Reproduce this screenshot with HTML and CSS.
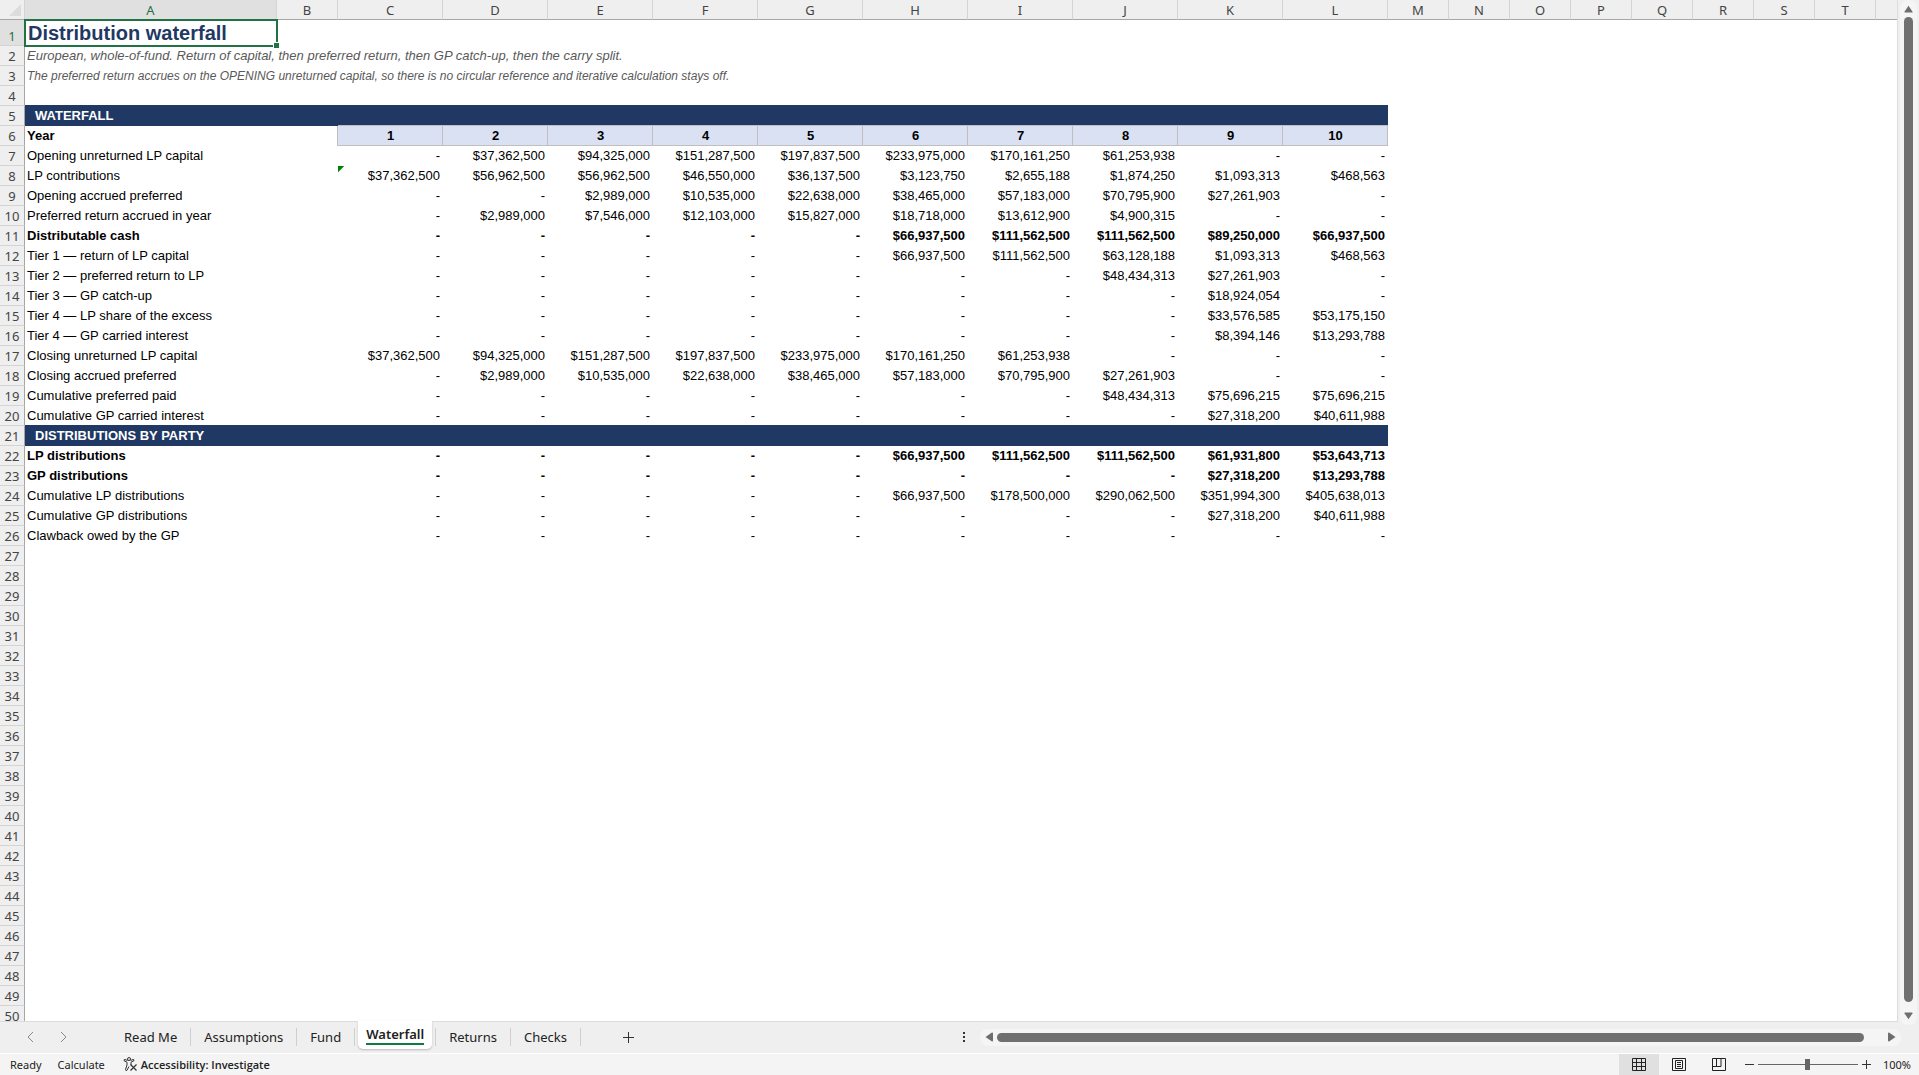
FILE: index.html
```html
<!DOCTYPE html>
<html lang="en">
<head>
<meta charset="utf-8">
<title>Distribution waterfall</title>
<link rel="stylesheet" href="styles.css">
</head>
<body>
<main class="workspace">
<div class="sheet">
<table class="grid">
<colgroup><col class="w-head"><col class="w-label"><col class="w-std"><col span="10" class="w-year"><col span="8" class="w-std"><col></colgroup>
<thead>
<tr><th class="corner"><svg width="12" height="12" viewBox="0 0 12 12"><path d="M12 0V12H0z" fill="#dcdcdc"/></svg></th><th class="current">A</th><th>B</th><th>C</th><th>D</th><th>E</th><th>F</th><th>G</th><th>H</th><th>I</th><th>J</th><th>K</th><th>L</th><th>M</th><th>N</th><th>O</th><th>P</th><th>Q</th><th>R</th><th>S</th><th>T</th><th class="rest"></th></tr>
</thead>
<tbody>
<tr class="title-row"><th class="current">1</th><td class="selected">Distribution waterfall<span class="fill-handle"></span></td><td colspan="20"></td></tr>
<tr class="note lead"><th>2</th><td colspan="21">European, whole-of-fund. Return of capital, then preferred return, then GP catch-up, then the carry split.</td></tr>
<tr class="note"><th>3</th><td colspan="21">The preferred return accrues on the OPENING unreturned capital, so there is no circular reference and iterative calculation stays off.</td></tr>
<tr><th>4</th><td colspan="21"></td></tr>
<tr class="band"><th>5</th><td colspan="12">WATERFALL</td><td colspan="9"></td></tr>
<tr class="years"><th>6</th><td>Year</td><td></td><td>1</td><td>2</td><td>3</td><td>4</td><td>5</td><td>6</td><td>7</td><td>8</td><td>9</td><td>10</td></tr>
<tr><th>7</th><td>Opening unreturned LP capital</td><td></td><td>-</td><td>$37,362,500</td><td>$94,325,000</td><td>$151,287,500</td><td>$197,837,500</td><td>$233,975,000</td><td>$170,161,250</td><td>$61,253,938</td><td>-</td><td>-</td></tr>
<tr><th>8</th><td>LP contributions</td><td></td><td class="flagged">$37,362,500</td><td>$56,962,500</td><td>$56,962,500</td><td>$46,550,000</td><td>$36,137,500</td><td>$3,123,750</td><td>$2,655,188</td><td>$1,874,250</td><td>$1,093,313</td><td>$468,563</td></tr>
<tr><th>9</th><td>Opening accrued preferred</td><td></td><td>-</td><td>-</td><td>$2,989,000</td><td>$10,535,000</td><td>$22,638,000</td><td>$38,465,000</td><td>$57,183,000</td><td>$70,795,900</td><td>$27,261,903</td><td>-</td></tr>
<tr><th>10</th><td>Preferred return accrued in year</td><td></td><td>-</td><td>$2,989,000</td><td>$7,546,000</td><td>$12,103,000</td><td>$15,827,000</td><td>$18,718,000</td><td>$13,612,900</td><td>$4,900,315</td><td>-</td><td>-</td></tr>
<tr class="total"><th>11</th><td>Distributable cash</td><td></td><td>-</td><td>-</td><td>-</td><td>-</td><td>-</td><td>$66,937,500</td><td>$111,562,500</td><td>$111,562,500</td><td>$89,250,000</td><td>$66,937,500</td></tr>
<tr><th>12</th><td>Tier 1 — return of LP capital</td><td></td><td>-</td><td>-</td><td>-</td><td>-</td><td>-</td><td>$66,937,500</td><td>$111,562,500</td><td>$63,128,188</td><td>$1,093,313</td><td>$468,563</td></tr>
<tr><th>13</th><td>Tier 2 — preferred return to LP</td><td></td><td>-</td><td>-</td><td>-</td><td>-</td><td>-</td><td>-</td><td>-</td><td>$48,434,313</td><td>$27,261,903</td><td>-</td></tr>
<tr><th>14</th><td>Tier 3 — GP catch-up</td><td></td><td>-</td><td>-</td><td>-</td><td>-</td><td>-</td><td>-</td><td>-</td><td>-</td><td>$18,924,054</td><td>-</td></tr>
<tr><th>15</th><td>Tier 4 — LP share of the excess</td><td></td><td>-</td><td>-</td><td>-</td><td>-</td><td>-</td><td>-</td><td>-</td><td>-</td><td>$33,576,585</td><td>$53,175,150</td></tr>
<tr><th>16</th><td>Tier 4 — GP carried interest</td><td></td><td>-</td><td>-</td><td>-</td><td>-</td><td>-</td><td>-</td><td>-</td><td>-</td><td>$8,394,146</td><td>$13,293,788</td></tr>
<tr><th>17</th><td>Closing unreturned LP capital</td><td></td><td>$37,362,500</td><td>$94,325,000</td><td>$151,287,500</td><td>$197,837,500</td><td>$233,975,000</td><td>$170,161,250</td><td>$61,253,938</td><td>-</td><td>-</td><td>-</td></tr>
<tr><th>18</th><td>Closing accrued preferred</td><td></td><td>-</td><td>$2,989,000</td><td>$10,535,000</td><td>$22,638,000</td><td>$38,465,000</td><td>$57,183,000</td><td>$70,795,900</td><td>$27,261,903</td><td>-</td><td>-</td></tr>
<tr><th>19</th><td>Cumulative preferred paid</td><td></td><td>-</td><td>-</td><td>-</td><td>-</td><td>-</td><td>-</td><td>-</td><td>$48,434,313</td><td>$75,696,215</td><td>$75,696,215</td></tr>
<tr><th>20</th><td>Cumulative GP carried interest</td><td></td><td>-</td><td>-</td><td>-</td><td>-</td><td>-</td><td>-</td><td>-</td><td>-</td><td>$27,318,200</td><td>$40,611,988</td></tr>
<tr class="band"><th>21</th><td colspan="12">DISTRIBUTIONS BY PARTY</td><td colspan="9"></td></tr>
<tr class="total"><th>22</th><td>LP distributions</td><td></td><td>-</td><td>-</td><td>-</td><td>-</td><td>-</td><td>$66,937,500</td><td>$111,562,500</td><td>$111,562,500</td><td>$61,931,800</td><td>$53,643,713</td></tr>
<tr class="total"><th>23</th><td>GP distributions</td><td></td><td>-</td><td>-</td><td>-</td><td>-</td><td>-</td><td>-</td><td>-</td><td>-</td><td>$27,318,200</td><td>$13,293,788</td></tr>
<tr><th>24</th><td>Cumulative LP distributions</td><td></td><td>-</td><td>-</td><td>-</td><td>-</td><td>-</td><td>$66,937,500</td><td>$178,500,000</td><td>$290,062,500</td><td>$351,994,300</td><td>$405,638,013</td></tr>
<tr><th>25</th><td>Cumulative GP distributions</td><td></td><td>-</td><td>-</td><td>-</td><td>-</td><td>-</td><td>-</td><td>-</td><td>-</td><td>$27,318,200</td><td>$40,611,988</td></tr>
<tr><th>26</th><td>Clawback owed by the GP</td><td></td><td>-</td><td>-</td><td>-</td><td>-</td><td>-</td><td>-</td><td>-</td><td>-</td><td>-</td><td>-</td></tr>
<tr><th>27</th></tr>
<tr><th>28</th></tr>
<tr><th>29</th></tr>
<tr><th>30</th></tr>
<tr><th>31</th></tr>
<tr><th>32</th></tr>
<tr><th>33</th></tr>
<tr><th>34</th></tr>
<tr><th>35</th></tr>
<tr><th>36</th></tr>
<tr><th>37</th></tr>
<tr><th>38</th></tr>
<tr><th>39</th></tr>
<tr><th>40</th></tr>
<tr><th>41</th></tr>
<tr><th>42</th></tr>
<tr><th>43</th></tr>
<tr><th>44</th></tr>
<tr><th>45</th></tr>
<tr><th>46</th></tr>
<tr><th>47</th></tr>
<tr><th>48</th></tr>
<tr><th>49</th></tr>
<tr><th>50</th></tr>
</tbody>
</table>
</div>
<div class="vscroll">
<button class="arrow" aria-label="Scroll up"><svg width="10" height="8" viewBox="0 0 10 8"><path d="M5 0.500L9.500 7Q9.700 8 8.500 8H1.500Q0.300 8 0.500 7z"/></svg></button>
<div class="thumb"></div>
<button class="arrow" aria-label="Scroll down"><svg width="10" height="8" viewBox="0 0 10 8"><path d="M5 7.500L9.500 1Q9.700 0 8.500 0H1.500Q0.300 0 0.500 1z"/></svg></button>
</div>
</main>
<nav class="tabbar">
<div class="nav-arrows">
<button aria-label="Previous sheet"><svg width="7" height="12" viewBox="0 0 7 12"><path d="M6 1L1 6l5 5"/></svg></button>
<button aria-label="Next sheet"><svg width="7" height="12" viewBox="0 0 7 12"><path d="M1 1l5 5-5 5"/></svg></button>
</div>
<div class="tabs">
<button class="tab">Read Me</button>
<button class="tab">Assumptions</button>
<button class="tab">Fund</button>
<button class="tab active"><span>Waterfall</span></button>
<button class="tab">Returns</button>
<button class="tab">Checks</button>
</div>
<button class="add" aria-label="New sheet"><svg width="11" height="11" viewBox="0 0 11 11"><path d="M5.500 0v11M0 5.500h11"/></svg></button>
<div class="splitter"><svg width="2" height="10" viewBox="0 0 2 10"><path d="M0 0h2v2H0zM0 4h2v2H0zM0 8h2v2H0z"/></svg></div>
<div class="hscroll">
<button class="arrow" aria-label="Scroll left"><svg width="8" height="10" viewBox="0 0 8 10"><path d="M0.500 5L7 0.500Q8 0.300 8 1.500V8.500Q8 9.700 7 9.500z"/></svg></button>
<div class="thumb"></div>
<button class="arrow" aria-label="Scroll right"><svg width="8" height="10" viewBox="0 0 8 10"><path d="M7.500 5L1 0.500Q0 0.300 0 1.500V8.500Q0 9.700 1 9.500z"/></svg></button>
</div>
</nav>
<footer class="status">
<span class="mode">Ready</span>
<span class="calc">Calculate</span>
<button class="access"><svg width="15" height="15" viewBox="0 0 15 15"><g fill="none" stroke="#333" stroke-width="1"><circle cx="6" cy="2" r="1.500"/><path d="M4.500 3.500L2 2.500Q0.700 2.500 1 3.700L4 5.200V8L2.500 12.500Q2.500 13.800 3.800 13.500L6 9.500M7.500 3.500L10 2.500Q11.300 2.500 11 3.700L8 5.200V8"/><path d="M7.500 7.500L13.500 13.500M13.500 7.500L7.500 13.500" stroke-width="1.200"/></g></svg><span>Accessibility: Investigate</span></button>
<div class="views">
<button class="on" aria-label="Normal view"><svg width="14" height="14" viewBox="0 0 14 14"><path d="M.500 .500h13v12h-13zM.500 4.500h13M.500 8.500h13M4.500 .500v12M9.500 .500v12"/></svg></button>
<button aria-label="Page layout view"><svg width="14" height="14" viewBox="0 0 14 14"><path d="M.500 .500h13v12h-13zM3.500 2.500h7v8h-7zM5 4.500h4M5 6.500h4M5 8.500h4"/></svg></button>
<button aria-label="Page break preview"><svg width="14" height="14" viewBox="0 0 14 14"><path d="M.500 .500h13v12h-13zM.500 8.500h8.500v-8M4.500 .500v8"/></svg></button>
</div>
<div class="zoom">
<button aria-label="Zoom out"><svg width="9" height="9" viewBox="0 0 9 9"><path d="M0 4.500h9"/></svg></button>
<input type="range" min="0" max="100" value="50" aria-label="Zoom">
<button aria-label="Zoom in"><svg width="9" height="9" viewBox="0 0 9 9"><path d="M0 4.500h9M4.500 0v9"/></svg></button>
<button class="percent">100%</button>
</div>
</footer>
</body>
</html>
```

FILE: styles.css
```css
* { box-sizing: border-box; }

body {
  margin: 0;
  height: 100vh;
  display: flex;
  flex-direction: column;
  overflow: hidden;
  background: #efefef;
  color: #222;
  font-family: "Noto Sans", sans-serif;
}

button {
  display: flex;
  align-items: center;
  justify-content: center;
  padding: 0;
  border: 0;
  background: none;
  color: inherit;
  font: inherit;
}

svg { display: block; }

/* Worksheet */
.workspace { flex: 1; min-height: 0; display: flex; }

.sheet {
  flex: 1;
  min-width: 0;
  overflow: hidden;
  border-right: 1px solid #dcdcdc;
  border-bottom: 1px solid #dcdcdc;
  background: #fff;
}

.grid {
  width: 100%;
  table-layout: fixed;
  border-collapse: separate;
  border-spacing: 0;
  font-family: "Liberation Sans", Arial, sans-serif;
  font-size: 13px;
  line-height: 16px;
  color: #000;
}

.w-head { width: 25px; }
.w-label { width: 252px; }
.w-std { width: 61px; }
.w-year { width: 105px; }

.grid th {
  padding: 0;
  background: #efefef;
  color: #444;
  font-family: "Noto Sans", sans-serif;
  font-weight: 400;
}

thead th {
  height: 20px;
  border-right: 1px solid #d4d4d4;
  border-bottom: 1px solid #a6a6a6;
}

thead .rest { border-right: 0; }
thead .corner { vertical-align: bottom; }
.corner svg { margin: 0 3px 3px 9px; }

.grid tbody th {
  height: 20px;
  padding-bottom: 1px;
  border-right: 1px solid #a6a6a6;
  border-bottom: 1px solid #d4d4d4;
  vertical-align: bottom;
}

.grid .current { background: #e0e0e0; color: #217346; }

.grid td {
  padding: 0 3px 0 2px;
  white-space: nowrap;
  text-align: right;
}

.grid td:nth-child(2) { text-align: left; }

.grid .title-row th { height: 26px; }

.grid .selected {
  position: relative;
  padding-left: 3px;
  outline: 2px solid #217346;
  outline-offset: -1px;
  color: #1f3864;
  font-size: 20px;
  font-weight: 700;
  line-height: 24px;
}

.fill-handle {
  position: absolute;
  right: -2px;
  bottom: -2px;
  width: 6px;
  height: 6px;
  border-top: 1px solid #fff;
  border-left: 1px solid #fff;
  background: #217346;
}

.note td { color: #595959; font-size: 12px; font-style: italic; }
.lead td { font-size: 13px; }

.grid .band td:nth-child(2) {
  padding-left: 10px;
  background: #1f3864;
  box-shadow: 0 -1px #1f3864;
  color: #fff;
  font-weight: 700;
}

.years td, .total td { font-weight: 700; }

.grid .years td:nth-child(n+4) {
  padding: 0 1px 0 2px;
  border-right: 1px solid #bfbfbf;
  border-bottom: 1px solid #bfbfbf;
  background: #d9e1f2;
  box-shadow: 0 -1px #bfbfbf;
  text-align: center;
}

.years td:nth-child(3) { border-right: 1px solid #bfbfbf; }

.flagged {
  background: linear-gradient(135deg, #008000 4px, transparent 5px) no-repeat;
}

/* Scroll bars */
.arrow { fill: #6e6e6e; }
.thumb { flex: 1; border-radius: 5px; background: #707070; }

.vscroll {
  width: 17px;
  margin: 0 2px -3px;
  padding: 5px 4px;
  display: flex;
  flex-direction: column;
  gap: 4px;
  border-radius: 8px;
  background: #f5f5f5;
}

.vscroll .arrow:last-child { margin-top: 6px; }

/* Sheet tabs */
.tabbar {
  height: 32px;
  padding-bottom: 1px;
  display: flex;
  align-items: center;
  border-bottom: 1px solid #fff;
  font-size: 13px;
}

.nav-arrows {
  width: 111px;
  padding-left: 27px;
  display: flex;
  gap: 26px;
  fill: none;
  stroke: #888;
}

.tabs { align-self: stretch; display: flex; align-items: center; }

.tab { height: 18px; padding: 0 13px; border-right: 1px solid #cfcfcf; }

.tab.active {
  align-self: flex-start;
  height: 28px;
  margin: -1px 3px 0;
  padding: 0 8px;
  border: 0;
  border-radius: 0 0 5px 5px;
  background: #fff;
  box-shadow: 0 1px 2px #bbb;
  font-weight: 600;
}

.tab.active span { border-bottom: 2px solid #107c41; }
.tab.active + .tab { border-left: 1px solid #cfcfcf; }

.add { width: 96px; stroke: #333; }

.splitter { margin-left: auto; padding-right: 15px; fill: #333; }

.hscroll {
  width: 48%;
  height: 17px;
  margin-right: 18px;
  padding: 4px 5px;
  display: flex;
  gap: 4px;
  border-radius: 8px;
  background: #f5f5f5;
}

.hscroll .arrow:last-child { margin-left: 20px; }

/* Status bar */
.status {
  height: 21px;
  display: flex;
  align-items: center;
  background: #f4f4f4;
  font-size: 11px;
  line-height: 16px;
}

.mode { padding: 0 16px 0 10px; }
.calc { padding-right: 18px; }
.access { gap: 3px; font-family: "Open Sans", sans-serif; font-weight: 600; }

.views {
  margin-left: auto;
  align-self: stretch;
  display: flex;
  fill: none;
  stroke: #222;
}

.views button { width: 40px; }
.views .on { background: #e0e0e0; }

.zoom {
  padding: 0 8px 0 6px;
  display: flex;
  align-items: center;
  gap: 4px;
  stroke: #333;
}

.zoom input {
  width: 100px;
  height: 12px;
  margin: 0;
  appearance: none;
  background: linear-gradient(#666, #666) center / 100% 1px no-repeat;
}

.zoom input::-webkit-slider-thumb {
  appearance: none;
  width: 5px;
  height: 11px;
  background: #666;
}

.percent { margin-left: 8px; stroke: none; }
```
